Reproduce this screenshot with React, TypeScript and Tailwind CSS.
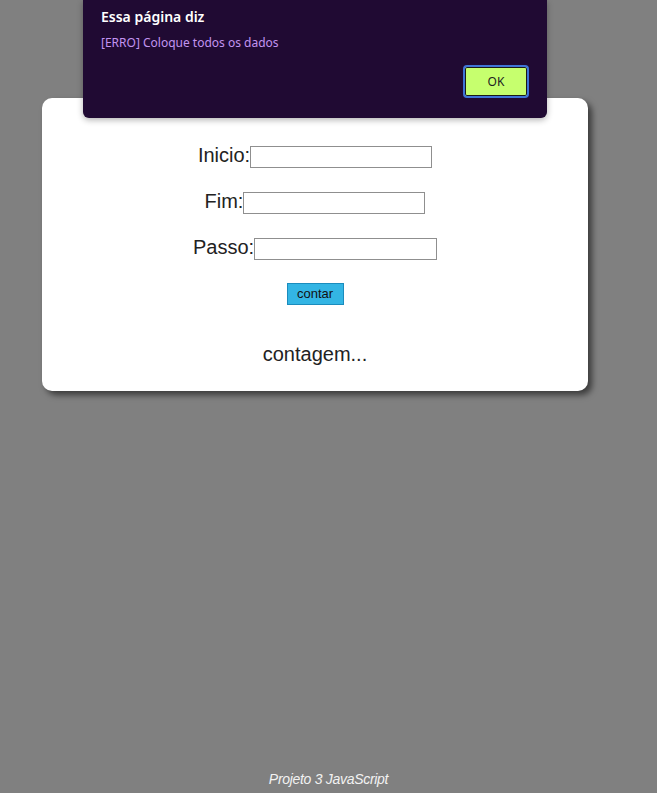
export default function App() {
  return (
    <div className="relative flex min-h-screen flex-col bg-[#808080] font-['Liberation_Sans',Arial,sans-serif]">
      {/* card */}
      <main className="ml-[42px] mt-[98px] w-[546px] rounded-[10px] bg-white pb-[25px] pt-[44px] text-[#222] shadow-[4px_4px_6px_rgba(0,0,0,0.55)]">
        <div className="flex flex-col items-center gap-[20px]">
          <div className="flex h-[26px] items-center text-[20px]">
            <span>Inicio:</span>
            <input type="number" className="mt-[4px] h-[22px] w-[182px] border border-[#8f8f8f] bg-white" />
          </div>
          <div className="flex h-[26px] items-center text-[20px]">
            <span>Fim:</span>
            <input type="number" className="mt-[4px] h-[22px] w-[182px] border border-[#8f8f8f] bg-white" />
          </div>
          <div className="flex h-[26px] items-center text-[20px]">
            <span>Passo:</span>
            <input type="number" className="mt-[4px] h-[22px] w-[183px] border border-[#8f8f8f] bg-white" />
          </div>
          <div className="flex h-[26px] items-center">
            <button className="mt-[2px] h-[22px] w-[57px] border border-[#1b8cbd] bg-[#33b5e4] text-[13px] text-[#111]">
              contar
            </button>
          </div>
        </div>
        <p className="mt-[37px] text-center text-[20px] leading-[23px]">contagem...</p>
      </main>

      <footer className="mt-auto pb-[3px] text-center text-[14px] italic tracking-[-0.3px] text-[#f2f2f2]">
        Projeto 3 JavaScript
      </footer>

      {/* alert dialog */}
      <div className="absolute left-[83px] top-0 h-[118px] w-[464px] rounded-b-[6px] bg-[#200a33] px-[18px] pt-[7px] font-['Noto_Sans','Open_Sans',sans-serif] shadow-[0_2px_6px_rgba(0,0,0,0.3)]">
        <div className="text-[14px] font-semibold leading-[20px] text-white">Essa página diz</div>
        <div className="mt-[7px] text-[12px] leading-[17px] text-[#c294f0]">[ERRO] Coloque todos os dados</div>
        <div className="mt-[14px] flex justify-end">
          <button className="h-[33px] w-[66px] rounded-[4px] border-2 border-[#3f74d8] bg-[#c6ff6e] text-[12px] text-[#222] shadow-[inset_0_0_0_1px_#1a1a1a]">
            OK
          </button>
        </div>
      </div>
    </div>
  );
}
